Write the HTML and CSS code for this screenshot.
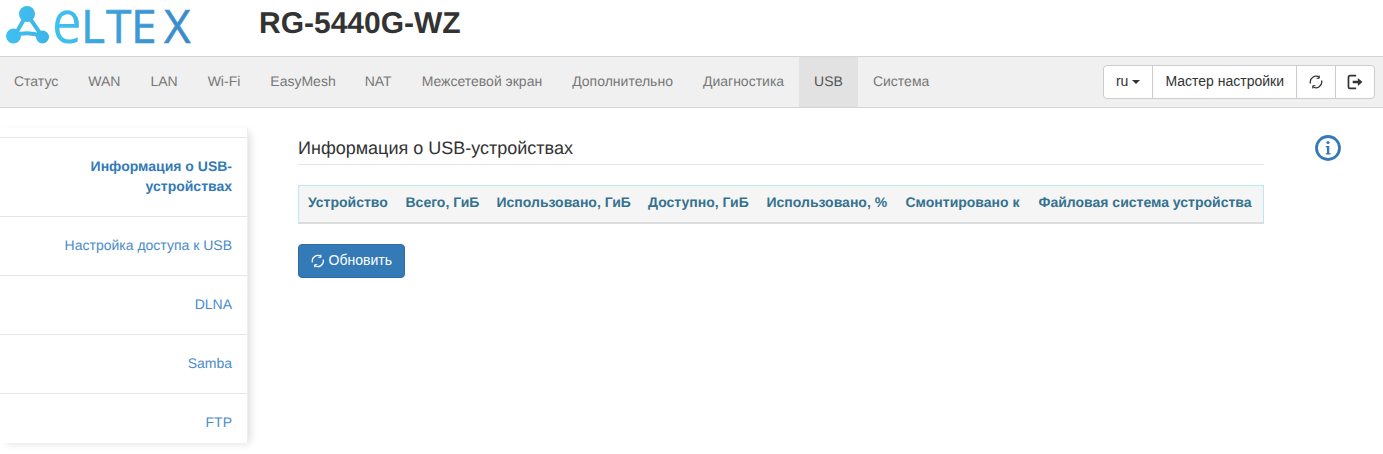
FILE: index.html
```html
<!DOCTYPE html>
<html lang="ru">
<head>
<meta charset="utf-8">
<title>RG-5440G-WZ</title>
<link rel="stylesheet" href="styles.css">
</head>
<body>
<header class="top">
  <svg class="logo" width="200" height="52" viewBox="0 0 200 52" aria-label="ELTEX">
    <defs>
      <linearGradient id="lg" gradientUnits="userSpaceOnUse" x1="6" y1="0" x2="196" y2="0">
        <stop offset="0" stop-color="#3fc1f0"/>
        <stop offset="1" stop-color="#3a87c8"/>
      </linearGradient>
    </defs>
    <path d="M27 14 L15 35 Q28 31 42 36 Z" fill="none" stroke="url(#lg)" stroke-width="4"/>
    <circle cx="27" cy="14" r="8" fill="url(#lg)"/>
    <circle cx="13.500" cy="36" r="7.500" fill="url(#lg)"/>
    <circle cx="42.500" cy="37" r="6.500" fill="url(#lg)"/>
    <text class="logo-e" fill="url(#lg)" transform="translate(52 43) scale(0.88 1)">e</text>
    <text class="logo-text" fill="url(#lg)" stroke="url(#lg)" y="43" x="81 106 131 164">LTEX</text>
  </svg>
  <h1 class="model">RG-5440G-WZ</h1>
</header>
<nav class="navbar">
  <ul class="menu">
    <li><a href="#">Статус</a></li>
    <li><a href="#">WAN</a></li>
    <li><a href="#">LAN</a></li>
    <li><a href="#">Wi-Fi</a></li>
    <li class="tight"><a href="#">EasyMesh</a></li>
    <li><a href="#">NAT</a></li>
    <li><a href="#">Межсетевой экран</a></li>
    <li><a href="#">Дополнительно</a></li>
    <li><a href="#">Диагностика</a></li>
    <li class="active"><a href="#">USB</a></li>
    <li><a href="#">Система</a></li>
  </ul>
  <div class="btn-group">
    <button class="btn">ru <span class="caret"></span></button>
    <button class="btn">Мастер настройки</button>
    <button class="btn btn-icon">
      <svg width="14" height="14" viewBox="0 0 14 14" fill="none" stroke="#333" stroke-width="1.300"><path d="M1.500 8.500A5.700 5.700 0 0 1 10.500 2.500"/><path d="M12.500 5.500A5.700 5.700 0 0 1 3.500 11.500"/><path d="M10.200 0.500V3.300H7.500" stroke-width="1"/><path d="M3.800 13.500V10.700H6.500" stroke-width="1"/></svg>
    </button>
    <button class="btn btn-icon">
      <svg width="16" height="16" viewBox="0 0 14 14"><path d="M8 1.500H2.500A1.200 1.200 0 0 0 1.300 2.700V11.300A1.200 1.200 0 0 0 2.500 12.500H8" fill="none" stroke="#333" stroke-width="1.500"/><path d="M5 6H9.500V3.500L13.500 7L9.500 10.500V8H5Z" fill="#333"/></svg>
    </button>
  </div>
</nav>
<div class="layout">
  <aside class="sidebar">
    <ul class="side-list">
      <li class="current"><a href="#">Информация о USB-устройствах</a></li>
      <li><a href="#">Настройка доступа к USB</a></li>
      <li><a href="#">DLNA</a></li>
      <li><a href="#">Samba</a></li>
      <li><a href="#">FTP</a></li>
    </ul>
  </aside>
  <main class="content">
    <h2 class="title">Информация о USB-устройствах</h2>
    <table class="table">
      <thead>
        <tr>
          <th>Устройство</th>
          <th>Всего, ГиБ</th>
          <th>Использовано, ГиБ</th>
          <th>Доступно, ГиБ</th>
          <th>Использовано, %</th>
          <th>Смонтировано к</th>
          <th>Файловая система устройства</th>
        </tr>
      </thead>
    </table>
    <button class="btn-primary">
      <svg width="14" height="14" viewBox="0 0 14 14" fill="none" stroke="#fff" stroke-width="1.300"><path d="M1.500 8.500A5.700 5.700 0 0 1 10.500 2.500"/><path d="M12.500 5.500A5.700 5.700 0 0 1 3.500 11.500"/><path d="M10.200 0.500V3.300H7.500" stroke-width="1"/><path d="M3.800 13.500V10.700H6.500" stroke-width="1"/></svg>
      <span class="btn-label">Обновить</span>
    </button>
  </main>
  <div class="help">
    <svg width="26" height="26" viewBox="0 0 26 26"><circle cx="13" cy="13" r="11.500" fill="none" stroke="#337ab7" stroke-width="2.800"/><circle cx="13" cy="7.500" r="1.600" fill="#337ab7"/><path d="M10.800 11H14.300V18.200H15.600V19.600H10.800V18.200H12V12.400H10.800Z" fill="#337ab7"/></svg>
  </div>
</div>
</body>
</html>
```
FILE: styles.css
```css
* { box-sizing: border-box; }
html, body { margin: 0; padding: 0; }
body {
  font-family: "Liberation Sans", Arial, sans-serif;
  font-size: 14px;
  line-height: 20px;
  color: #333;
  background: #fff;
  height: 454px;
  overflow: hidden;
  text-rendering: geometricPrecision;
}
a { text-decoration: none; color: inherit; }
ul { list-style: none; margin: 0; padding: 0; }

.top { height: 56px; display: flex; align-items: flex-start; }
.logo { display: block; flex: none; overflow: visible; }
.logo-text {
  font-family: "Open Sans", sans-serif;
  font-size: 46px;
  stroke-width: 0.6px;
}
.logo-e {
  font-family: "Open Sans", sans-serif;
  font-size: 60px;
}
.model {
  margin: 7px 0 0 59px;
  font-size: 30px;
  line-height: 33px;
  font-weight: 700;
  color: #333;
}

.navbar {
  height: 52px;
  display: flex;
  justify-content: space-between;
  background: #f0f0f0;
  border-top: 1px solid #d4d4d4;
  border-bottom: 1px solid #d4d4d4;
  padding-right: 8px;
}
.menu { display: flex; }
.menu a {
  display: block;
  height: 50px;
  padding: 14px 15px 16px;
  color: #777;
}
.menu li:first-child a { padding-left: 14px; }
.menu .tight a { padding-right: 14px; }
.menu .active a { background: #e2e2e2; color: #555; }

.btn-group { display: flex; margin-top: 8px; height: 34px; }
.btn {
  font: inherit;
  color: #333;
  background: #fff;
  border: 1px solid #ccc;
  margin-left: -1px;
  padding: 5px 12px 7px;
  height: 34px;
  display: flex;
  align-items: center;
  gap: 4px;
}
.btn:first-child { border-radius: 4px 0 0 4px; }
.btn:last-child { border-radius: 0 4px 4px 0; }
.btn-icon { width: 40px; justify-content: center; padding: 0; }
.caret {
  display: inline-block;
  width: 0;
  height: 0;
  margin-top: 2px;
  border-top: 4px solid #333;
  border-left: 4px solid transparent;
  border-right: 4px solid transparent;
}

.layout { display: flex; align-items: flex-start; }
.sidebar {
  flex: none;
  width: 248px;
  height: 315px;
  margin-top: 20px;
  padding-top: 9px;
  border-right: 1px solid #eee;
  box-shadow: 4px 2px 8px -2px rgba(0, 0, 0, 0.14);
}
.side-list li { border-top: 1px solid #e6e6e6; }
.side-list a {
  display: block;
  padding: 18px 15px 20px;
  text-align: right;
  color: #4a8bc9;
}
.side-list .current a { font-weight: 700; color: #337ab7; }

.content { width: 966px; margin-left: 50px; padding-top: 28px; }
.title {
  margin: 0 0 20px;
  padding-bottom: 4px;
  font-size: 18px;
  line-height: 24px;
  font-weight: 400;
  color: #333;
  border-bottom: 1px solid #e5e5e5;
}
.table {
  width: 100%;
  table-layout: fixed;
  border-collapse: separate;
  border-spacing: 0;
  margin-bottom: 20px;
  background: #f5f5f5;
  border: 1px solid #bce8f1;
  border-bottom: 2px solid #ddd;
}
.table th {
  padding: 6px 0 10px 9px;
  height: 36px;
  text-align: left;
  font-weight: 700;
  color: #34728f;
  white-space: nowrap;
}
.table th:nth-child(1) { width: 97.5px; }
.table th:nth-child(2) { width: 91px; }
.table th:nth-child(3) { width: 151.5px; }
.table th:nth-child(4) { width: 118.5px; }
.table th:nth-child(5) { width: 139px; }
.table th:nth-child(6) { width: 133px; }
.btn-primary {
  font: inherit;
  height: 34px;
  width: 107px;
  display: flex;
  align-items: center;
  gap: 4px;
  padding: 0 12px;
  color: #fff;
  background: #337ab7;
  border: 1px solid #2e6da4;
  border-radius: 4px;
}
.btn-label { margin-bottom: 2px; }
.help { margin: 27px 0 0 51px; line-height: 0; }
```
